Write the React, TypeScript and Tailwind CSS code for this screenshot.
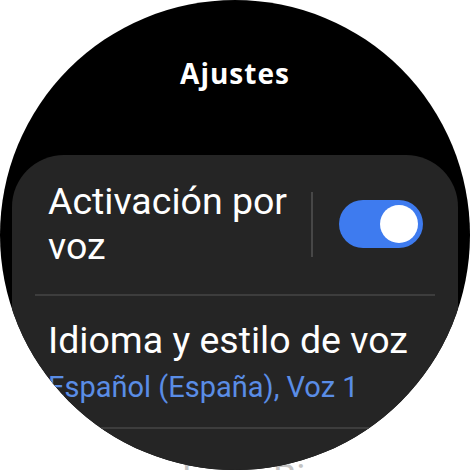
import React from 'react';

const font = { fontFamily: 'Roboto, "Noto Sans", sans-serif' };

export default function App() {
  return (
    <div className="relative w-[470px] h-[470px] bg-white overflow-hidden" style={font}>
      {/* next item peeking out below the round screen */}
      <div className="absolute left-[180px] top-[452px] w-[130px] h-[18px] overflow-hidden">
        <div className="-ml-[124px] pt-[3px] text-[37.5px] leading-[45px] text-[#c4c4c4] whitespace-nowrap">
          Asistente de Bixby
        </div>
      </div>

      <div className="absolute inset-0 z-10 rounded-full bg-black overflow-hidden">
        <h1
          className="pt-[58px] text-center text-[28px] leading-[30px] font-bold tracking-[1px] text-white"
          style={{ fontFamily: '"Open Sans", Roboto, sans-serif' }}
        >
          Ajustes
        </h1>

        <div className="mt-[67px] mx-[12px] rounded-[52px] bg-[#252525] h-[400px]">
          {/* Activación por voz */}
          <div className="flex items-center pt-[24px] pb-[25px] pl-[36px] pr-[35px]">
            <div className="flex-1 text-[37.5px] leading-[45px] text-white">
              Activación por
              <br />
              voz
            </div>
            <div className="w-[2px] h-[65px] bg-[#474747] mr-[26px]" />
            <div className="w-[84px] h-[48px] rounded-full bg-[#3e7bef] flex items-center justify-end pr-[5px]">
              <div className="w-[38px] h-[38px] rounded-full bg-white" />
            </div>
          </div>
          <div className="mx-[23px] h-[2px] bg-[#3d3d3d]" />

          {/* Idioma y estilo de voz */}
          <div className="pl-[36px] pt-[22px] pb-[16px]">
            <div className="text-[37.5px] leading-[45px] text-white whitespace-nowrap">Idioma y estilo de voz</div>
            <div className="text-[29px] leading-[48px] text-[#5a8de6] whitespace-nowrap">Español (España), Voz 1</div>
          </div>
          <div className="mx-[23px] h-[2px] bg-[#3d3d3d]" />
        </div>
      </div>
    </div>
  );
}
